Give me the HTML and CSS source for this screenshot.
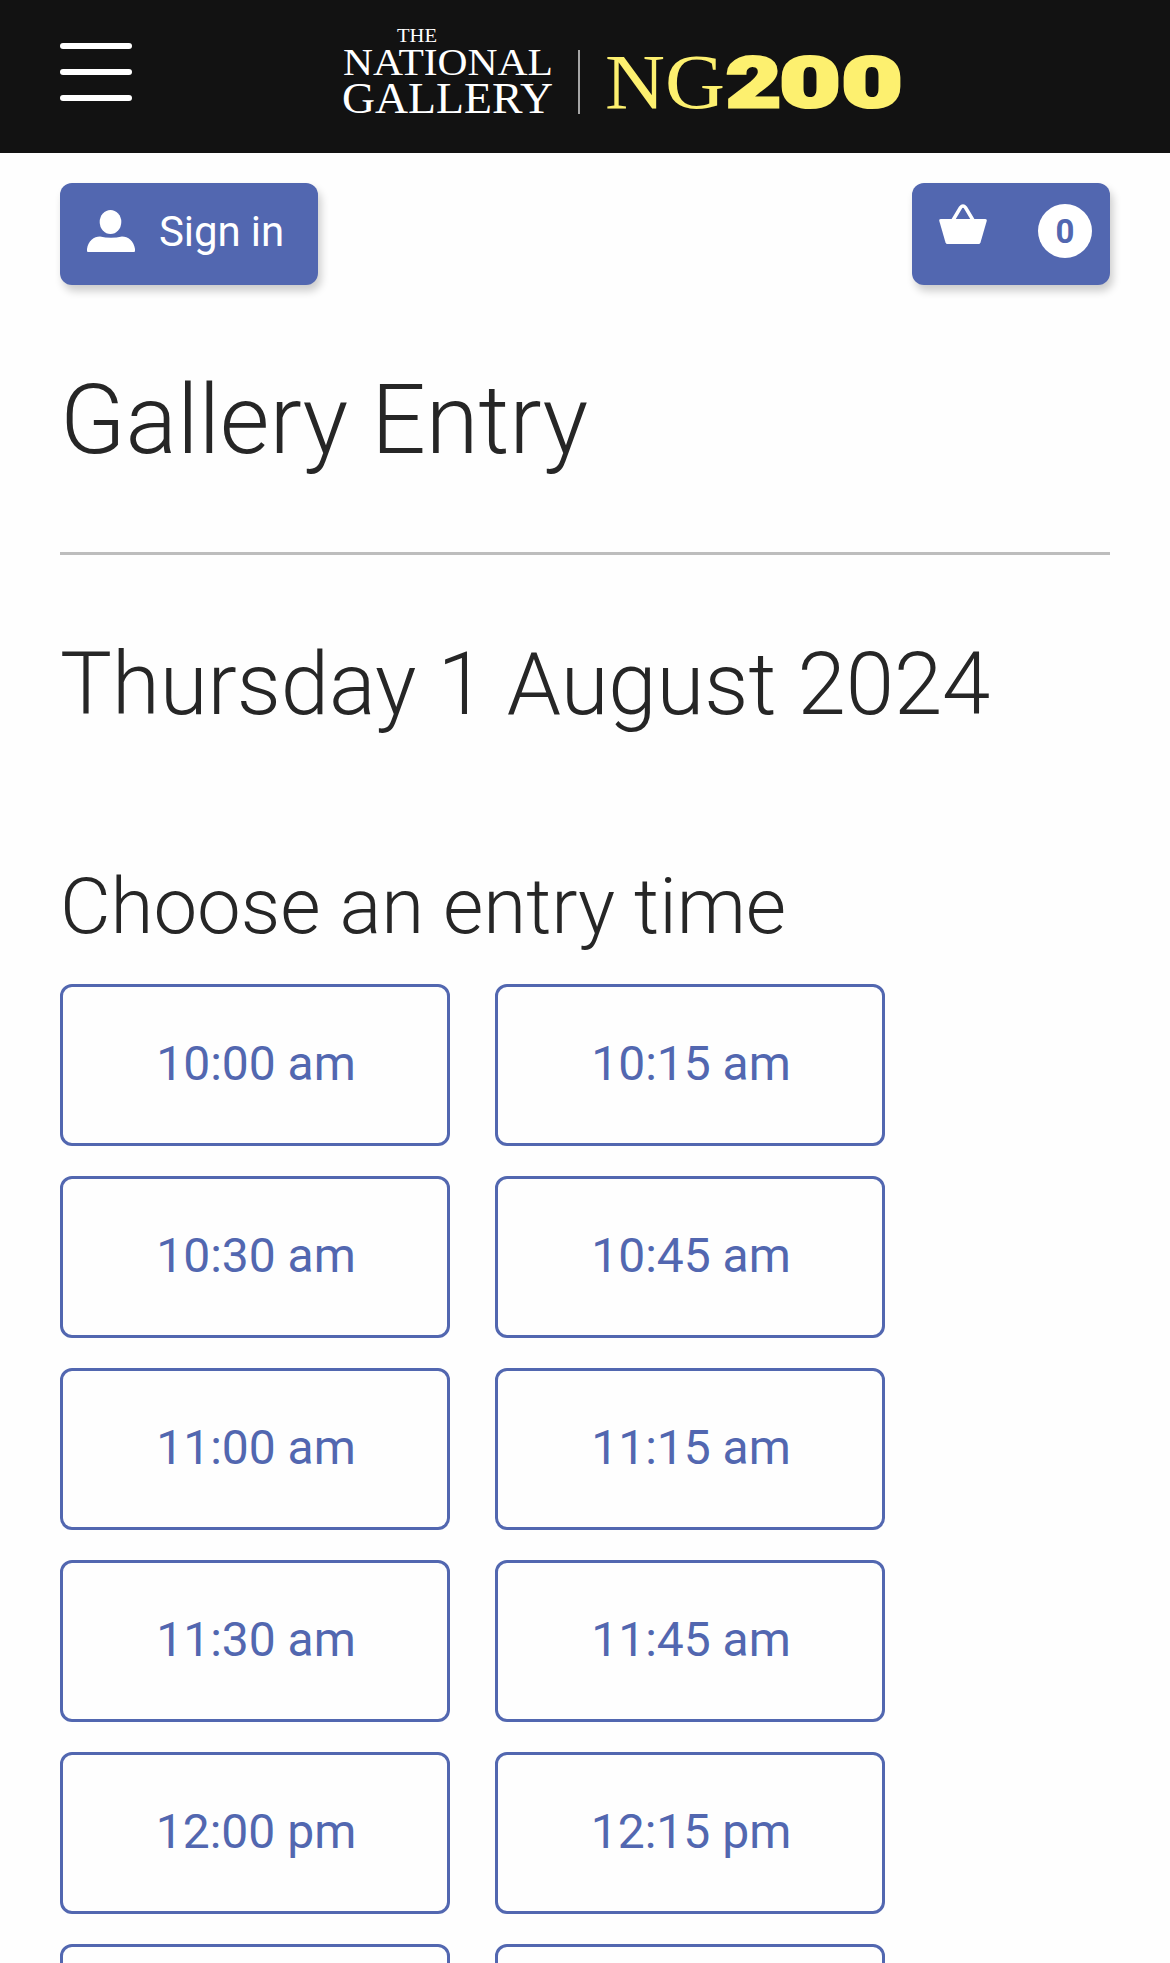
FILE: index.html
```html
<!DOCTYPE html>
<html lang="en">
<head>
    <meta charset="UTF-8">
    <meta name="viewport" content="width=device-width, initial-scale=1.0">
    <title>Gallery Entry</title>
    <link rel="stylesheet" href="styles.css">
</head>
<body>
    <header class="site-header">
        <button class="menu-button" aria-label="Menu">
            <span class="menu-line"></span>
            <span class="menu-line"></span>
            <span class="menu-line"></span>
        </button>
        <svg class="logo" viewBox="0 0 568 100" width="568" height="100">
            <g class="logo-name">
                <text x="57" y="18" font-size="18.5" textLength="40" lengthAdjust="spacingAndGlyphs">THE</text>
                <text x="3" y="50.5" font-size="38.5" textLength="210" lengthAdjust="spacingAndGlyphs">NATIONAL</text>
                <text x="2" y="89" font-size="44" textLength="211" lengthAdjust="spacingAndGlyphs">GALLERY</text>
            </g>
            <rect class="logo-divider" x="238" y="26" width="2" height="64"/>
            <text class="logo-ng" x="265" y="84" font-size="79" textLength="120" lengthAdjust="spacingAndGlyphs">NG</text>
            <g class="logo-200">
                <text x="386" y="82.5" font-size="71" textLength="55" lengthAdjust="spacingAndGlyphs">2</text>
                <text x="439.5" y="82.5" font-size="71" textLength="61" lengthAdjust="spacingAndGlyphs">0</text>
                <text x="501.5" y="82.5" font-size="71" textLength="61" lengthAdjust="spacingAndGlyphs">0</text>
            </g>
        </svg>
    </header>

    <main class="page">
        <div class="toolbar">
            <button class="btn sign-in">
                <svg class="icon-user" viewBox="0 0 48 42" width="48" height="42">
                    <ellipse cx="23.500" cy="12" rx="10.800" ry="12"/>
                    <path d="M0 42V39C1 31 7 26.500 13 26.500C20 28.200 28 28.200 35 26.500C41 26.500 47 31 48 39V41Q48 42 47 42H1Q0 42 0 41Z"/>
                </svg>
                <span>Sign in</span>
            </button>
            <button class="btn basket">
                <svg class="icon-basket" viewBox="0 0 48 41" width="48" height="41">
                    <path class="basket-handle" d="M13.500 17L21.500 3.500Q24 0.500 26.500 3.500L34.500 17"/>
                    <path d="M2 15H46Q48.200 15 47.700 17L41.500 38.500Q41 40 39.500 40H8.500Q7 40 6.500 38.500L0.300 17Q-0.200 15 2 15Z"/>
                </svg>
                <span class="count">0</span>
            </button>
        </div>

        <h1>Gallery Entry</h1>
        <h2>Thursday 1 August 2024</h2>
        <h3>Choose an entry time</h3>

        <div class="times">
            <button class="time">10:00 am</button>
            <button class="time">10:15 am</button>
            <button class="time">10:30 am</button>
            <button class="time">10:45 am</button>
            <button class="time">11:00 am</button>
            <button class="time">11:15 am</button>
            <button class="time">11:30 am</button>
            <button class="time">11:45 am</button>
            <button class="time">12:00 pm</button>
            <button class="time">12:15 pm</button>
            <button class="time" aria-label="12:30 pm"></button>
            <button class="time" aria-label="12:45 pm"></button>
        </div>
    </main>
</body>
</html>
```
FILE: styles.css
```css
:root {
    --primary-color: #5267b0;
    --header-color: #121212;
    --text-color: #262626;
    --logo-yellow: #fdf06f;
}

* {
    box-sizing: border-box;
}

body {
    margin: 0;
    height: 1963px;
    overflow: hidden;
    font-family: Roboto, sans-serif;
    background-color: #fefefe;
    color: var(--text-color);
}

button {
    font-family: inherit;
    padding: 0;
    cursor: pointer;
}

/* Header */
.site-header {
    display: flex;
    align-items: flex-start;
    height: 153px;
    padding: 24px 60px 0;
    background-color: var(--header-color);
}

.menu-button {
    display: flex;
    flex-direction: column;
    gap: 20px;
    width: 72px;
    margin-top: 19px;
    border: none;
    background: none;
}

.menu-line {
    height: 6px;
    border-radius: 3px;
    background-color: #fff;
}

.logo {
    margin-left: 208px;
    font-family: "Liberation Serif", serif;
}

.logo-name {
    fill: #fff;
}

.logo-divider {
    fill: #a5a5a5;
}

.logo-ng {
    fill: var(--logo-yellow);
}

.logo-200 {
    font-family: Roboto, sans-serif;
    font-weight: 900;
    fill: var(--logo-yellow);
    stroke: var(--logo-yellow);
    stroke-width: 3px;
}

/* Page */
.page {
    padding: 30px 60px 0;
}

.toolbar {
    display: flex;
    justify-content: space-between;
}

.btn {
    display: flex;
    height: 102px;
    border: none;
    border-radius: 12px;
    background-color: var(--primary-color);
    box-shadow: 3px 6px 9px rgba(0, 0, 0, 0.2);
    color: #fff;
    fill: #fff;
}

.sign-in {
    width: 258px;
    align-items: center;
    gap: 24px;
    padding: 0 0 6px 27px;
    font-size: 42px;
    letter-spacing: -0.1px;
}

.basket {
    width: 198px;
    justify-content: space-between;
    padding: 21px 18px 0 27px;
}

.basket-handle {
    fill: none;
    stroke: #fff;
    stroke-width: 3.5px;
}

.count {
    width: 54px;
    height: 54px;
    border-radius: 50%;
    background-color: #fff;
    color: var(--primary-color);
    font-size: 33px;
    font-weight: 700;
    line-height: 56px;
}

h1, h2, h3 {
    margin: 0;
    font-weight: 300;
}

h1 {
    padding: 79px 0 76px;
    border-bottom: 3px solid #bdbdbd;
    font-size: 96px;
    line-height: 112px;
    letter-spacing: -0.1px;
}

h2 {
    padding-top: 75px;
    font-size: 87px;
    line-height: 108px;
    letter-spacing: -0.05px;
}

h3 {
    padding-top: 121px;
    font-size: 78px;
    line-height: 96px;
    letter-spacing: -0.05px;
}

/* Entry times */
.times {
    display: grid;
    grid-template-columns: repeat(2, 390px);
    gap: 30px 45px;
    margin-top: 29px;
}

.time {
    height: 162px;
    padding: 0 0 4px 2px;
    border: 3px solid var(--primary-color);
    border-radius: 12px;
    background-color: #fefefe;
    color: var(--primary-color);
    font-size: 48px;
}
```
